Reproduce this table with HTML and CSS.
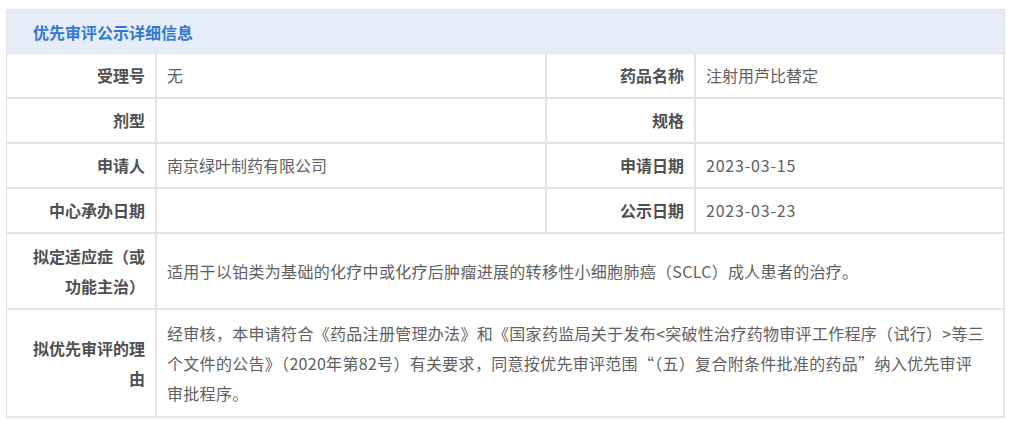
FILE: index.html
```html
<!DOCTYPE html>
<html lang="zh-CN">
<head>
<meta charset="utf-8">
<title>优先审评公示详细信息</title>
<link rel="stylesheet" href="styles.css">
</head>
<body>
<div class="panel">
  <div class="panel-head">优先审评公示详细信息</div>
  <div class="grid">
    <div class="lbl">受理号</div>
    <div class="val">无</div>
    <div class="lbl">药品名称</div>
    <div class="val">注射用芦比替定</div>

    <div class="lbl">剂型</div>
    <div class="val"></div>
    <div class="lbl">规格</div>
    <div class="val"></div>

    <div class="lbl">申请人</div>
    <div class="val">南京绿叶制药有限公司</div>
    <div class="lbl">申请日期</div>
    <div class="val num">2023-03-15</div>

    <div class="lbl">中心承办日期</div>
    <div class="val"></div>
    <div class="lbl">公示日期</div>
    <div class="val num">2023-03-23</div>

    <div class="lbl tall">拟定适应症（或功能主治）</div>
    <div class="val wide spaced">适用于以铂类为基础的化疗中或化疗后肿瘤进展的转移性小细胞肺癌（SCLC）成人患者的治疗。</div>

    <div class="lbl tall">拟优先审评的理由</div>
    <div class="val wide reason">经审核，本申请符合《药品注册管理办法》和《国家药监局关于发布&lt;突破性治疗药物审评工作程序（试行）&gt;等三个文件的公告》（2020年第82号）有关要求，同意按优先审评范围“（五）复合附条件批准的药品”纳入优先审评审批程序。</div>
  </div>
</div>
</body>
</html>
```

FILE: styles.css
```css
html, body {
  margin: 0;
  padding: 0;
  background: #ffffff;
}

body {
  font-family: "Noto Sans CJK SC", "Microsoft YaHei", "Noto Sans", sans-serif;
  font-size: 16px;
  color: #5a5a5a;
}

.panel {
  margin: 9px 0 0 6px;
  width: 999px;
  box-sizing: border-box;
  border-left: 1px solid #e3e3e3;
}

.panel-head {
  height: 45px;
  box-sizing: border-box;
  border-top: 1px solid #e3e3e3;
  border-right: 2px solid #e3e3e3;
  border-bottom: 1px solid #dfe3ea;
  background: #e7edf8;
  color: #3277d6;
  font-weight: bold;
  line-height: 44px;
  padding-left: 26px;
}

.grid {
  display: grid;
  grid-template-columns: 150px 390px 149px 1fr;
}

.lbl, .val {
  box-sizing: border-box;
  border-right: 2px solid #e3e3e3;
  border-bottom: 2px solid #e3e3e3;
  line-height: 30px;
  padding: 6px 10px 7px;
  min-height: 45px;
  display: flex;
  align-items: center;
}

.lbl {
  justify-content: flex-end;
  text-align: right;
  font-weight: bold;
  color: #505050;
  padding-left: 16px;
}

.val {
  color: #606060;
}

.num {
  letter-spacing: 0.8px;
}

.spaced {
  letter-spacing: 0.3px;
}

.wide {
  grid-column: 2 / 5;
}

.tall {
  padding-top: 7px;
  padding-bottom: 7px;
}

.reason {
  padding: 8px 17px 8px 10px;
  letter-spacing: 0.3px;
}
```
